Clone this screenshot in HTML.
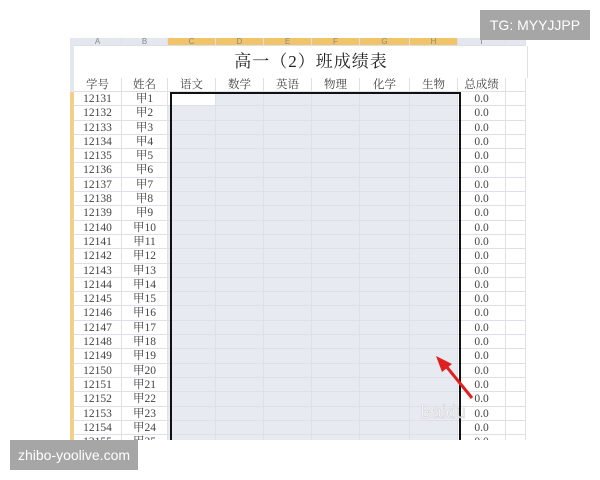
<!DOCTYPE html>
<html><head><meta charset="utf-8"><style>
body{margin:0;width:600px;height:480px;background:#fff;position:relative;overflow:hidden;font-family:"Liberation Serif","Noto Serif CJK SC",serif;}
#sheet{position:absolute;left:70px;top:38px;width:458px;height:402px;overflow:hidden;background:#fff;}
.r{display:flex;height:14.3px;line-height:14.3px;font-size:11.5px;color:#444;}
.c{flex:none;text-align:center;border-right:1px solid #dde0e6;border-bottom:1px solid #dde0e6;box-sizing:border-box;white-space:nowrap;overflow:hidden}
.s{width:4px;background:#f5cf8a;border:none}
.a{width:48px}.b{width:46px}.x{width:48px;background:#e8eaf2}.g{width:50px;background:#e8eaf2}.i{width:48px}.j{width:20px}
.hdr .c{background:#e4e7ee;color:#888;font-size:8px;line-height:8px;font-family:"Liberation Sans",sans-serif}
.hdr .o{background:#f2c46a}
#box{position:absolute;left:170px;top:92px;width:291px;height:360px;border:2px solid #111;box-sizing:border-box;}
.badge{position:absolute;background:#a6a6a6;color:#fff;font-family:"Liberation Sans",sans-serif;font-size:14px;display:flex;align-items:center;justify-content:center}
</style></head><body>
<div id="sheet">
<div class="r hdr" style="height:8px;line-height:8px"><div class="c s" style="background:#e4e7ee"></div><div class="c a">A</div><div class="c b">B</div><div class="c x o">C</div><div class="c x o">D</div><div class="c x o">E</div><div class="c x o">F</div><div class="c g o">G</div><div class="c x o">H</div><div class="c i">I</div><div class="c j"></div></div>
<div class="r" style="height:32px;line-height:32px"><div style="width:4px;flex:none;background:#e4e7ee"></div><div style="flex:none;width:434px;text-align:center;font-size:17px;color:#222;letter-spacing:1px;padding-left:40px;box-sizing:border-box">高一（2）班成绩表</div><div class="c j" style="border-bottom:none"></div></div>
<div class="r" style="height:14px;line-height:14px"><div class="c s" style="background:#e4e7ee"></div><div class="c a">学号</div><div class="c b">姓名</div><div class="c a">语文</div><div class="c a">数学</div><div class="c a">英语</div><div class="c a">物理</div><div class="c" style="width:50px">化学</div><div class="c a">生物</div><div class="c i">总成绩</div><div class="c j"></div></div>
<div class="r"><div class="c s"></div><div class="c a">12131</div><div class="c b">甲1</div><div class="c x" style="background:#fff"></div><div class="c x"></div><div class="c x"></div><div class="c x"></div><div class="c g"></div><div class="c x"></div><div class="c i">0.0</div><div class="c j"></div></div>
<div class="r"><div class="c s"></div><div class="c a">12132</div><div class="c b">甲2</div><div class="c x"></div><div class="c x"></div><div class="c x"></div><div class="c x"></div><div class="c g"></div><div class="c x"></div><div class="c i">0.0</div><div class="c j"></div></div>
<div class="r"><div class="c s"></div><div class="c a">12133</div><div class="c b">甲3</div><div class="c x"></div><div class="c x"></div><div class="c x"></div><div class="c x"></div><div class="c g"></div><div class="c x"></div><div class="c i">0.0</div><div class="c j"></div></div>
<div class="r"><div class="c s"></div><div class="c a">12134</div><div class="c b">甲4</div><div class="c x"></div><div class="c x"></div><div class="c x"></div><div class="c x"></div><div class="c g"></div><div class="c x"></div><div class="c i">0.0</div><div class="c j"></div></div>
<div class="r"><div class="c s"></div><div class="c a">12135</div><div class="c b">甲5</div><div class="c x"></div><div class="c x"></div><div class="c x"></div><div class="c x"></div><div class="c g"></div><div class="c x"></div><div class="c i">0.0</div><div class="c j"></div></div>
<div class="r"><div class="c s"></div><div class="c a">12136</div><div class="c b">甲6</div><div class="c x"></div><div class="c x"></div><div class="c x"></div><div class="c x"></div><div class="c g"></div><div class="c x"></div><div class="c i">0.0</div><div class="c j"></div></div>
<div class="r"><div class="c s"></div><div class="c a">12137</div><div class="c b">甲7</div><div class="c x"></div><div class="c x"></div><div class="c x"></div><div class="c x"></div><div class="c g"></div><div class="c x"></div><div class="c i">0.0</div><div class="c j"></div></div>
<div class="r"><div class="c s"></div><div class="c a">12138</div><div class="c b">甲8</div><div class="c x"></div><div class="c x"></div><div class="c x"></div><div class="c x"></div><div class="c g"></div><div class="c x"></div><div class="c i">0.0</div><div class="c j"></div></div>
<div class="r"><div class="c s"></div><div class="c a">12139</div><div class="c b">甲9</div><div class="c x"></div><div class="c x"></div><div class="c x"></div><div class="c x"></div><div class="c g"></div><div class="c x"></div><div class="c i">0.0</div><div class="c j"></div></div>
<div class="r"><div class="c s"></div><div class="c a">12140</div><div class="c b">甲10</div><div class="c x"></div><div class="c x"></div><div class="c x"></div><div class="c x"></div><div class="c g"></div><div class="c x"></div><div class="c i">0.0</div><div class="c j"></div></div>
<div class="r"><div class="c s"></div><div class="c a">12141</div><div class="c b">甲11</div><div class="c x"></div><div class="c x"></div><div class="c x"></div><div class="c x"></div><div class="c g"></div><div class="c x"></div><div class="c i">0.0</div><div class="c j"></div></div>
<div class="r"><div class="c s"></div><div class="c a">12142</div><div class="c b">甲12</div><div class="c x"></div><div class="c x"></div><div class="c x"></div><div class="c x"></div><div class="c g"></div><div class="c x"></div><div class="c i">0.0</div><div class="c j"></div></div>
<div class="r"><div class="c s"></div><div class="c a">12143</div><div class="c b">甲13</div><div class="c x"></div><div class="c x"></div><div class="c x"></div><div class="c x"></div><div class="c g"></div><div class="c x"></div><div class="c i">0.0</div><div class="c j"></div></div>
<div class="r"><div class="c s"></div><div class="c a">12144</div><div class="c b">甲14</div><div class="c x"></div><div class="c x"></div><div class="c x"></div><div class="c x"></div><div class="c g"></div><div class="c x"></div><div class="c i">0.0</div><div class="c j"></div></div>
<div class="r"><div class="c s"></div><div class="c a">12145</div><div class="c b">甲15</div><div class="c x"></div><div class="c x"></div><div class="c x"></div><div class="c x"></div><div class="c g"></div><div class="c x"></div><div class="c i">0.0</div><div class="c j"></div></div>
<div class="r"><div class="c s"></div><div class="c a">12146</div><div class="c b">甲16</div><div class="c x"></div><div class="c x"></div><div class="c x"></div><div class="c x"></div><div class="c g"></div><div class="c x"></div><div class="c i">0.0</div><div class="c j"></div></div>
<div class="r"><div class="c s"></div><div class="c a">12147</div><div class="c b">甲17</div><div class="c x"></div><div class="c x"></div><div class="c x"></div><div class="c x"></div><div class="c g"></div><div class="c x"></div><div class="c i">0.0</div><div class="c j"></div></div>
<div class="r"><div class="c s"></div><div class="c a">12148</div><div class="c b">甲18</div><div class="c x"></div><div class="c x"></div><div class="c x"></div><div class="c x"></div><div class="c g"></div><div class="c x"></div><div class="c i">0.0</div><div class="c j"></div></div>
<div class="r"><div class="c s"></div><div class="c a">12149</div><div class="c b">甲19</div><div class="c x"></div><div class="c x"></div><div class="c x"></div><div class="c x"></div><div class="c g"></div><div class="c x"></div><div class="c i">0.0</div><div class="c j"></div></div>
<div class="r"><div class="c s"></div><div class="c a">12150</div><div class="c b">甲20</div><div class="c x"></div><div class="c x"></div><div class="c x"></div><div class="c x"></div><div class="c g"></div><div class="c x"></div><div class="c i">0.0</div><div class="c j"></div></div>
<div class="r"><div class="c s"></div><div class="c a">12151</div><div class="c b">甲21</div><div class="c x"></div><div class="c x"></div><div class="c x"></div><div class="c x"></div><div class="c g"></div><div class="c x"></div><div class="c i">0.0</div><div class="c j"></div></div>
<div class="r"><div class="c s"></div><div class="c a">12152</div><div class="c b">甲22</div><div class="c x"></div><div class="c x"></div><div class="c x"></div><div class="c x"></div><div class="c g"></div><div class="c x"></div><div class="c i">0.0</div><div class="c j"></div></div>
<div class="r"><div class="c s"></div><div class="c a">12153</div><div class="c b">甲23</div><div class="c x"></div><div class="c x"></div><div class="c x"></div><div class="c x"></div><div class="c g"></div><div class="c x"></div><div class="c i">0.0</div><div class="c j"></div></div>
<div class="r"><div class="c s"></div><div class="c a">12154</div><div class="c b">甲24</div><div class="c x"></div><div class="c x"></div><div class="c x"></div><div class="c x"></div><div class="c g"></div><div class="c x"></div><div class="c i">0.0</div><div class="c j"></div></div>
<div class="r"><div class="c s"></div><div class="c a">12155</div><div class="c b">甲25</div><div class="c x"></div><div class="c x"></div><div class="c x"></div><div class="c x"></div><div class="c g"></div><div class="c x"></div><div class="c i">0.0</div><div class="c j"></div></div>
<div id="box" style="left:100px;top:54px;height:360px"></div>
</div>
<svg style="position:absolute;left:0;top:0" width="600" height="480"><line x1="472" y1="398" x2="446" y2="366" stroke="#e02020" stroke-width="3"/><polygon points="436,356 452,364 442,372" fill="#e02020"/><text x="420" y="418" font-family="Liberation Sans,sans-serif" font-size="18" fill="#fff" fill-opacity="0.75" stroke="#ccc" stroke-width="0.5">Baidu</text></svg>
<div class="badge" style="left:480px;top:10px;width:110px;height:30px">TG: MYYJJPP</div>
<div class="badge" style="left:10px;top:440px;width:128px;height:30px">zhibo-yoolive.com</div>
</body></html>
